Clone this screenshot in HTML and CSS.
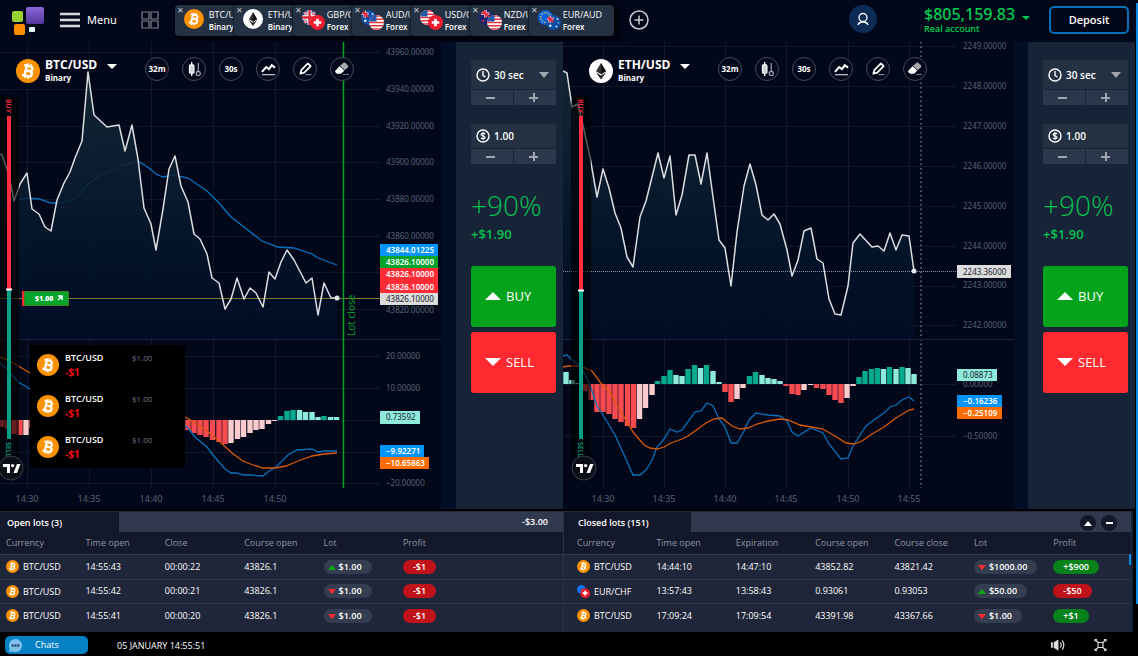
FILE: index.html
```html
<!DOCTYPE html>
<html lang="en">
<head>
<meta charset="utf-8">
<meta name="viewport" content="width=device-width, initial-scale=1">
<title>Trading terminal</title>
<link rel="stylesheet" href="styles.css">
</head>
<body>
<svg class="sprite" aria-hidden="true">
  <defs>
    <symbol id="btc" viewBox="0 0 24 24">
      <circle cx="12" cy="12" r="12" fill="#fe9205"/>
      <g transform="rotate(13 12 12)" fill="none" stroke="#fff" stroke-width="2.400">
        <path d="M7 7h6c3.600 0 3.600 4.800 0 4.800H9.500M13 11.800c4.600 0 4.600 5.400 0 5.400H7M9.600 7v10.200"/>
        <path d="M10.400 4.600V7M13.400 4.600V7M10.400 17v2.600M13.400 17v2.600" stroke-width="1.600"/>
      </g>
    </symbol>
    <symbol id="eth" viewBox="0 0 24 24">
      <circle cx="12" cy="12" r="12" fill="#fff"/>
      <path d="M12 4l5 8.200-5 3-5-3z" fill="#333"/><path d="M12 4l5 8.200-5 3z" fill="#111"/>
      <path d="M7 13.400l5 3 5-3-5 7z" fill="#222"/>
    </symbol>
    <clipPath id="disc"><circle cx="7" cy="7" r="7"/></clipPath>
    <symbol id="us" viewBox="0 0 14 14"><g clip-path="url(#disc)"><path fill="#fff" d="M0 0h14v14H0z"/><path stroke="#e8343f" stroke-width="1.400" d="M0 1h14M0 4h14M0 7h14M0 10h14M0 13h14"/><path fill="#2458a8" d="M0 0h7v6H0z"/></g></symbol>
    <symbol id="ch" viewBox="0 0 14 14"><g clip-path="url(#disc)"><path fill="#ee1c2e" d="M0 0h14v14H0z"/><path stroke="#fff" stroke-width="2.400" d="M7 3.500v7M3.500 7h7"/></g></symbol>
    <symbol id="gb" viewBox="0 0 14 14"><g clip-path="url(#disc)"><path fill="#1f3f94" d="M0 0h14v14H0z"/><path stroke="#fff" stroke-width="2.600" d="M0 0l14 14M14 0L0 14"/><path stroke="#e0283a" d="M0 0l14 14M14 0L0 14"/><path stroke="#fff" stroke-width="4" d="M7 0v14M0 7h14"/><path stroke="#e0283a" stroke-width="2.200" d="M7 0v14M0 7h14"/></g></symbol>
    <symbol id="au" viewBox="0 0 14 14"><g clip-path="url(#disc)"><path fill="#0d4fa4" d="M0 0h14v14H0z"/><path stroke="#fff" stroke-width="2.400" d="M0 3.500h7M3.500 0v7"/><path stroke="#e8283a" stroke-width="1.400" d="M0 3.500h7M3.500 0v7M0 0l7 7"/><path fill="#fff" d="M3 9h2v2H3zM10 3h1.500v1.500H10zM9 10h1.500v1.500H9zM11 7h1v1h-1z"/></g></symbol>
    <symbol id="nz" viewBox="0 0 14 14"><g clip-path="url(#disc)"><path fill="#12246e" d="M0 0h14v14H0z"/><path stroke="#fff" stroke-width="2.400" d="M2 3.500h8M6 0v7"/><path stroke="#e8283a" stroke-width="1.400" d="M2 3.500h8M6 0v7M2 0l8 7"/><path fill="#e8283a" d="M3 9h2v2H3zM10 7h1.500v1.500H10z"/></g></symbol>
    <symbol id="eu" viewBox="0 0 14 14"><circle cx="7" cy="7" r="7" fill="#0a63e0"/><circle cx="7" cy="7" r="4.500" fill="none" stroke="#f2d431" stroke-width="1.200" stroke-dasharray="1.200 1.156"/></symbol>
    <symbol id="candles" viewBox="0 0 16 16"><path d="M5 0v15" stroke="#fff" stroke-width="1.400"/><rect x="2.600" y="3" width="4.800" height="9" rx="1.200" fill="#cfd3da" stroke="#fff" stroke-width="1.200"/><path d="M12 1v9" stroke="#aab" stroke-width="1.200"/><circle cx="12" cy="12.200" r="2.200" fill="none" stroke="#aab" stroke-width="1.200"/></symbol>
    <symbol id="trend" viewBox="0 0 16 16"><path d="M1 10.500L5.500 5.500l3 2 3-4L15 6" fill="none" stroke="#fff" stroke-width="2.200"/><path d="M1 13.500h14" stroke="#b9bec8" stroke-width="1.400"/></symbol>
    <symbol id="pencil" viewBox="0 0 16 16"><path d="M2.500 12.500l1.200-4.200L10.500 1.500l3 3-6.800 6.800z" fill="none" stroke="#fff" stroke-width="1.800" stroke-linejoin="round"/><path d="M8 13.500h6.500" stroke="#8b92a0" stroke-width="1.200"/></symbol>
    <symbol id="eraser" viewBox="0 0 16 16"><path d="M0 10.500q0-1 1-2L5 4.500 9.800 9.300 6.500 12.600H2z" fill="#fff"/><path d="M5.400 4.100L9 .8q1-.8 2 0l2.800 2.800q.8 1 0 2L10.200 8.900z" fill="#a8a8ad"/><path d="M8.500 13.300H15" stroke="#6b7383" stroke-width="1.200"/></symbol>
    <symbol id="clock" viewBox="0 0 14 14"><circle cx="7" cy="7" r="6" fill="none" stroke="#fff" stroke-width="1.400"/><path d="M7 3v4.500l2.500 1.500" fill="none" stroke="#fff" stroke-width="1.400"/></symbol>
    <symbol id="coin" viewBox="0 0 14 14"><circle cx="7" cy="7" r="6" fill="none" stroke="#fff" stroke-width="1.400"/><path d="M9 5C8 3.800 5 4 5.200 5.600 5.400 7.200 9 6.700 9 8.500 9 10 6 10.200 4.900 8.900M7 3v8" fill="none" stroke="#fff" stroke-width="1.200"/></symbol>
    <symbol id="tv" viewBox="0 0 26 26"><circle cx="13" cy="13" r="12" fill="#0b0e17" stroke="#3a3f4a"/><path d="M5 9h7v9H9v-6H5zM19 9h3.500L19 18h-3.500z" fill="#fff"/><circle cx="14.600" cy="10.600" r="1.700" fill="#fff"/></symbol>
    <linearGradient id="fill" x1="0" y1="72" x2="0" y2="340" gradientUnits="userSpaceOnUse"><stop offset="0" stop-color="#152a38"/><stop offset=".35" stop-color="#0c2032"/><stop offset=".7" stop-color="#03142a"/><stop offset="1" stop-color="#000d27"/></linearGradient>
    <linearGradient id="violet" x1="0" y1="0" x2="0" y2="1"><stop offset="0" stop-color="#8a68d8"/><stop offset="1" stop-color="#5537a0"/></linearGradient>
  </defs>
</svg>

<header class="topbar">
  <svg class="logo" viewBox="0 0 34 30" aria-label="Logo"><rect y="4" width="11" height="11" rx="2" fill="#97d22f"/><rect x="14" width="18" height="17" rx="2" fill="url(#violet)"/><rect x="2" y="17" width="11" height="11" rx="2" fill="#ff8c05"/><rect x="17" y="20" width="6" height="5" rx="1" fill="#e4f7fd"/></svg>
  <button class="menu" type="button"><svg viewBox="0 0 20 16"><path d="M0 2h20M0 8h20M0 14h20" stroke="#d5d7dc" stroke-width="2.600"/></svg>Menu</button>
  <button class="layout" type="button" aria-label="Layout"><svg viewBox="0 0 18 18"><path d="M1 1h7v7H1zM10 1h7v7h-7zM1 10h7v7H1zM10 10h7v7h-7z" fill="none" stroke="#80848d" stroke-width="1.200"/></svg></button>
  <nav class="tabs">
    <div class="tab"><button class="close" type="button" aria-label="Close">✕</button><svg class="coin"><use href="#btc"/></svg><a href="#btc-usd"><b>BTC/USD</b><small>Binary</small></a></div>
    <div class="tab"><button class="close" type="button" aria-label="Close">✕</button><svg class="coin"><use href="#eth"/></svg><a href="#eth-usd"><b>ETH/USD</b><small>Binary</small></a></div>
    <div class="tab"><button class="close" type="button" aria-label="Close">✕</button><svg class="pair" viewBox="0 0 24 20"><use href="#gb" width="15" height="15"/><use href="#ch" x="8" y="5" width="15" height="15"/></svg><a href="#gbp-chf"><b>GBP/CHF</b><small>Forex</small></a></div>
    <div class="tab"><button class="close" type="button" aria-label="Close">✕</button><svg class="pair" viewBox="0 0 24 20"><use href="#au" width="15" height="15"/><use href="#us" x="8" y="5" width="15" height="15"/></svg><a href="#aud-usd"><b>AUD/USD</b><small>Forex</small></a></div>
    <div class="tab"><button class="close" type="button" aria-label="Close">✕</button><svg class="pair" viewBox="0 0 24 20"><use href="#us" width="15" height="15"/><use href="#ch" x="8" y="5" width="15" height="15"/></svg><a href="#usd-chf"><b>USD/CHF</b><small>Forex</small></a></div>
    <div class="tab"><button class="close" type="button" aria-label="Close">✕</button><svg class="pair" viewBox="0 0 24 20"><use href="#nz" width="15" height="15"/><use href="#us" x="8" y="5" width="15" height="15"/></svg><a href="#nzd-usd"><b>NZD/USD</b><small>Forex</small></a></div>
    <div class="tab tab-last"><button class="close" type="button" aria-label="Close">✕</button><svg class="pair" viewBox="0 0 24 20"><use href="#eu" width="15" height="15"/><use href="#au" x="8" y="5" width="15" height="15"/></svg><a href="#eur-aud"><b>EUR/AUD</b><small>Forex</small></a></div>
  </nav>
  <button class="add" type="button" aria-label="Add asset"><svg viewBox="0 0 20 20"><circle cx="10" cy="10" r="9" fill="none" stroke="#c9ccd3" stroke-width="1.500"/><path d="M10 5.500v9M5.500 10h9" stroke="#c9ccd3" stroke-width="1.500"/></svg></button>
  <div class="account">
    <button class="user" type="button" aria-label="Profile"><svg viewBox="0 0 16 16"><circle cx="8" cy="6.500" r="4" fill="none" stroke="#fff" stroke-width="1.300"/><path d="M3 14c1-4 9-4 10 0" fill="none" stroke="#fff" stroke-width="1.300"/></svg></button>
    <button class="balance" type="button"><span class="sum">$805,159.83 <i class="caret green"></i></span><small>Real account</small></button>
    <button class="deposit" type="button">Deposit</button>
  </div>
</header>

<main class="panels">
  <section class="panel">
    <div class="chart">
      <svg class="plot" viewBox="0 42 456 467" preserveAspectRatio="xMinYMin slice">
        <path class="margin" d="M441 42h15v467h-15z"/>
        <path class="grid" d="M27.500 42v446M89.500 42v446M151.500 42v446M213.500 42v446M275.500 42v446M0 52.500h380M0 89.500h380M0 126.500h380M0 162.500h380M0 199.500h380M0 236.500h380M0 272.500h380M0 309.500h380M0 356.500h380M0 388.500h380M0 420.500h380M0 452.500h380M0 483.500h380"/>
        <path class="avg" d="M0 203L27 198 39 199 51 203 60 203 70 201 80 194 88 184 100 175 120 166 138 161 149 168 156 174 163 177 173 175 188 178 207 191 219 203 231 217 244 227 262 241 278 247 294 248 312 254 318 258 337 265"/>
        <path class="area" d="M0 340V154L2 155 9 175 14 201 20 184 27 173 32 209 39 214 45 227 51 231 57 200 64 183 70 172 75 158 82 141 88 72 94 115 107 127 119 125 125 151 132 125 138 159 144 208 151 224 156 250 163 209 169 169 175 156 181 186 188 202 194 234 200 239 207 254 212 278 219 283 225 309 231 299 237 278 244 299 250 288 256 293 263 307 269 272 275 279 281 262 287 250 294 260 306 283 312 278 318 315 324 283 331 298 337 298V340z"/>
        <path class="rule" d="M0 298.500h380"/>
        <path class="price" d="M0 154L2 155 9 175 14 201 20 184 27 173 32 209 39 214 45 227 51 231 57 200 64 183 70 172 75 158 82 141 88 72 94 115 107 127 119 125 125 151 132 125 138 159 144 208 151 224 156 250 163 209 169 169 175 156 181 186 188 202 194 234 200 239 207 254 212 278 219 283 225 309 231 299 237 278 244 299 250 288 256 293 263 307 269 272 275 279 281 262 287 250 294 260 306 283 312 278 318 315 324 283 331 298 337 298"/>
        <circle cx="337" cy="298" r="2.500" fill="#e4e6ea"/>
        <path class="divider" d="M0 339.500h441"/>
        <path class="bar red" d="M2 420v7M8 420v9M14 420v14M20 420v15M32 420v8M188 420v10M194 420v13M200 420v15M206 420v17M212.500 420v20M219 420v22M225 420v24"/>
        <path class="bar pink" d="M26 420v15M231 420v23M237.500 420v19M243.500 420v17M250 420v13M256 420v10M262 420v9M268.500 420v4M274.500 420v1"/>
        <path class="bar green" d="M280.500 420v-4M287 420v-9M293 420v-10M324 420v-4"/>
        <path class="bar mint" d="M299.500 420v-10M305.500 420v-8M312 420v-8M318 420v-3M330.500 420v-3M336.500 420v-3"/>
        <path class="macd" d="M0 363L9 371 18 382 27 387 40 395 160 405 185 426 188 428 195 437 207 447 213 455 225 469 231 473 237 473 243 475 250 475 263 476 269 471 276 467 288 455 297 450 312 449 318 452 324 451 337 451"/>
        <path class="signal" d="M0 357L10 361 20 367 30 373 160 405 185 417 192 421 206 430 219 441 232 453 243 461 253 465 263 468 275 468 286 466 298 461 312 456 324 454 337 453"/>
        <path d="M343.500 42v446" stroke="#05a42b" stroke-width="1.500"/>
        <text class="lot" transform="translate(355 336) rotate(-90)">Lot close</text>
        <g class="axis"><text x="386" y="55">43960.00000</text><text x="386" y="92">43940.00000</text><text x="386" y="129">43920.00000</text><text x="386" y="165">43900.00000</text><text x="386" y="202">43880.00000</text><text x="386" y="239">43860.00000</text><text x="386" y="313">43820.00000</text><text x="386" y="359">20.00000</text><text x="386" y="391">10.00000</text><text x="386" y="486">−20.00000</text></g>
        <g class="times"><text x="27" y="502">14:30</text><text x="89" y="502">14:35</text><text x="151" y="502">14:40</text><text x="213" y="502">14:45</text><text x="275" y="502">14:50</text></g>
        <g class="tag"><rect x="380" y="244" width="58" height="12" fill="#0093fa"/><rect x="380" y="256" width="58" height="13" fill="#05a42b"/><rect x="380" y="268" width="58" height="25" fill="#ff2b35"/><rect x="380" y="293" width="58" height="12" fill="#dcdcdc"/><rect x="380" y="411" width="40" height="13" fill="#8eeadb"/><rect x="380" y="445" width="44" height="12" fill="#0093fa"/><rect x="380" y="457" width="49" height="12" fill="#ff6d00"/>
        <text x="386" y="253">43844.01225</text><text x="386" y="265">43826.10000</text><text x="386" y="277">43826.10000</text><text x="386" y="290">43826.10000</text><text class="dark" x="386" y="302">43826.10000</text><text class="dark" x="386" y="420">0.73592</text><text x="386" y="454">−9.92271</text><text x="386" y="466">−10.65863</text></g>
        <path d="M0 95h9q10 0 10 10v352H0z" fill="#000" opacity=".6"/>
        <path class="mood" d="M9 116v174" stroke="#ff2b41"/><path class="mood" d="M9 290v149" stroke="#07a086"/><path d="M6 289.500h6" stroke="#fff" stroke-width="2"/>
        <text class="buy-text" transform="translate(6 99) rotate(90)">BUY</text><text class="sell-text" transform="translate(6 442) rotate(90)">SELL</text>
        <use href="#tv" x="-2" y="455" width="26" height="26"/>
        <path d="M22 291h3v15h-3z" fill="#ff2b35"/><path d="M24.500 291.500h44v14h-44z" fill="#05a42b" stroke="#4b7a22"/>
        <text class="order" x="35" y="301">$1.00</text><path d="M58 296h4v4M62 296l-4 4" fill="none" stroke="#fff" stroke-width="1.500"/>
      </svg>
      <div class="overlay">
        <svg class="asset-icon"><use href="#btc"/></svg>
        <div class="asset"><b>BTC/USD</b><small>Binary</small></div><i class="caret"></i>
        <div class="tools">
          <button type="button">32m</button>
          <button type="button" aria-label="Chart type"><svg><use href="#candles"/></svg></button>
          <button type="button">30s</button>
          <button type="button" aria-label="Indicators"><svg><use href="#trend"/></svg></button>
          <button type="button" aria-label="Draw"><svg><use href="#pencil"/></svg></button>
          <button type="button" aria-label="Erase"><svg><use href="#eraser"/></svg></button>
        </div>
      </div>
      <ul class="popup">
        <li><svg><use href="#btc"/></svg><div><b>BTC/USD</b><strong>-$1</strong></div><span>$1.00</span></li>
        <li><svg><use href="#btc"/></svg><div><b>BTC/USD</b><strong>-$1</strong></div><span>$1.00</span></li>
        <li><svg><use href="#btc"/></svg><div><b>BTC/USD</b><strong>-$1</strong></div><span>$1.00</span></li>
      </ul>
    </div>
    <aside class="trade">
      <div class="field"><label class="value"><svg><use href="#clock"/></svg><select aria-label="Time"><option>30 sec</option></select><i class="caret grey"></i></label><button type="button" aria-label="Less time"><i class="minus"></i></button><button type="button" aria-label="More time"><i class="minus plus"></i></button></div>
      <div class="field field-sum"><label class="value"><svg><use href="#coin"/></svg><input type="text" value="1.00" aria-label="Amount"></label><button type="button" aria-label="Less"><i class="minus"></i></button><button type="button" aria-label="More"><i class="minus plus"></i></button></div>
      <p class="percent">+90%</p>
      <p class="win">+$1.90</p>
      <button class="buy" type="button"><i class="up"></i>BUY</button>
      <button class="sell" type="button"><i class="down"></i>SELL</button>
    </aside>
  </section>

  <section class="panel">
    <div class="chart">
      <svg class="plot" viewBox="563 42 465 467" preserveAspectRatio="xMinYMin slice">
        <path class="margin" d="M1014 42h14v467h-14z"/>
        <path class="grid" d="M603.500 42v446M664.500 42v446M725.500 42v446M786.500 42v446M848.500 42v446M909.500 42v446M563 46.500h393M563 86.500h393M563 126.500h393M563 166.500h393M563 206.500h393M563 246.500h393M563 286.500h393M563 325.500h393M563 384.500h393M563 436.500h393"/>
        <path class="area" d="M563 340V71L567 73 572 107 578 104 583 125 590 157 597 197 603 169 609 188 615 213 621 228 627 257 633 267 640 217 646 201 658 153 664 178 670 156 676 215 682 195 689 155 695 155 701 184 707 153 713 197 719 240 725 248 731 286 737 232 744 186 750 164 756 185 762 215 768 220 774 214 780 224 787 250 792 276 798 260 804 231 811 228 817 259 823 263 829 299 835 314 841 315 848 286 853 243 860 234 872 247 878 246 884 251 890 233 896 250 902 235 909 236 914 271V340z"/>
        <path d="M563 271.500h395" stroke="#8d939e" stroke-dasharray="1 1"/>
        <path class="price" d="M563 71L567 73 572 107 578 104 583 125 590 157 597 197 603 169 609 188 615 213 621 228 627 257 633 267 640 217 646 201 658 153 664 178 670 156 676 215 682 195 689 155 695 155 701 184 707 153 713 197 719 240 725 248 731 286 737 232 744 186 750 164 756 185 762 215 768 220 774 214 780 224 787 250 792 276 798 260 804 231 811 228 817 259 823 263 829 299 835 314 841 315 848 286 853 243 860 234 872 247 878 246 884 251 890 233 896 250 902 235 909 236 914 271"/>
        <circle cx="914" cy="271" r="2.500" fill="#e4e6ea"/>
        <path d="M921 42v446" stroke="#a3a8b2" stroke-dasharray="1.500 3"/>
        <path class="divider" d="M563 339.500h451"/>
        <path class="bar red" d="M585 384v7M591 384v16M597 384v28M603 384v28M609 384v30M615 384v35M621 384v38M627.500 384v42M633.500 384v44M725 384v8M731 384v18M786 384v2M792 384v10M798 384v11M816.500 384v4M823 384v5M829 384v11M835 384v16M841 384v19"/>
        <path class="bar pink" d="M639.500 384v35M645.500 384v24M652 384v11M737 384v15M743 384v4M804 384v6M810.500 384v1M847 384v14M853 384v2"/>
        <path class="bar green" d="M657.500 384v-3M664 384v-8M670 384v-14M688 384v-15M694.500 384v-19M706.500 384v-19M749.500 384v-8M755.500 384v-12M859 384v-7M865 384v-13M871.500 384v-15M877.500 384v-16M889.500 384v-17M902 384v-17"/>
        <path class="bar mint" d="M566 384v-12M572 384v-4M578 384v-1M676 384v-9M682 384v-8M700.500 384v-16M713 384v-13M719 384v-2M762 384v-9M768 384v-6M774 384v-5M780 384v-3M883.500 384v-15M896 384v-15M908 384v-16M914 384v-10"/>
        <path class="macd" d="M563 356L567 355 572 360 578 364 583 370 590 385 597 406 603 415 615 435 621 448 633 475 640 475 646 470 652 460 657 447 664 439 670 429 677 432 682 430 695 412 701 411 707 403 713 406 719 419 725 427 731 443 737 443 744 431 749 420 756 413 768 415 780 416 787 421 792 432 798 436 811 428 823 433 829 444 841 459 848 458 853 446 866 426 878 417 884 413 890 407 896 405 902 400 909 397 914 401"/>
        <path class="signal" d="M563 367L568 366 580 366 592 371 600 382 610 393 621 412 633 432 644 445 650 448 657 449 664 447 671 443 682 439 688 436 695 431 706 423 714 419 722 418 732 426 740 429 748 428 757 424 768 421 780 419 788 420 800 425 811 427 823 429 835 436 846 443 854 444 862 441 872 434 884 427 896 418 909 410 914 409"/>
        <g class="axis"><text x="963" y="49">2249.00000</text><text x="963" y="89">2248.00000</text><text x="963" y="129">2247.00000</text><text x="963" y="169">2246.00000</text><text x="963" y="209">2245.00000</text><text x="963" y="249">2244.00000</text><text x="963" y="288">2243.00000</text><text x="963" y="328">2242.00000</text><text x="963" y="387">0.00000</text><text x="963" y="439">−0.50000</text></g>
        <g class="times"><text x="603" y="502">14:30</text><text x="664" y="502">14:35</text><text x="725" y="502">14:40</text><text x="786" y="502">14:45</text><text x="848" y="502">14:50</text><text x="909" y="502">14:55</text></g>
        <g class="tag"><rect x="957" y="265" width="54" height="13" fill="#dcdcdc"/><rect x="957" y="369" width="40" height="12" fill="#8eeadb"/><rect x="957" y="395" width="45" height="12" fill="#0093fa"/><rect x="957" y="407" width="45" height="12" fill="#ff6d00"/>
        <text class="dark" x="963" y="275">2243.36000</text><text class="dark" x="963" y="378">0.08873</text><text x="963" y="404">−0.16236</text><text x="963" y="416">−0.25109</text></g>
        <path d="M571 457V105q0-10 10-10t10 10v352z" fill="#000" opacity=".6"/>
        <path class="mood" d="M581 116v174" stroke="#ff2b41"/><path class="mood" d="M581 290v149" stroke="#07a086"/><path d="M578 290.500h6" stroke="#fff" stroke-width="2"/>
        <text class="buy-text" transform="translate(578 99) rotate(90)">BUY</text><text class="sell-text" transform="translate(578 442) rotate(90)">SELL</text>
        <use href="#tv" x="571" y="455" width="26" height="26"/>
      </svg>
      <div class="overlay overlay-inset">
        <svg class="asset-icon"><use href="#eth"/></svg>
        <div class="asset"><b>ETH/USD</b><small>Binary</small></div><i class="caret"></i>
        <div class="tools">
          <button type="button">32m</button>
          <button type="button" aria-label="Chart type"><svg><use href="#candles"/></svg></button>
          <button type="button">30s</button>
          <button type="button" aria-label="Indicators"><svg><use href="#trend"/></svg></button>
          <button type="button" aria-label="Draw"><svg><use href="#pencil"/></svg></button>
          <button type="button" aria-label="Erase"><svg><use href="#eraser"/></svg></button>
        </div>
      </div>
    </div>
    <aside class="trade">
      <div class="field"><label class="value"><svg><use href="#clock"/></svg><select aria-label="Time"><option>30 sec</option></select><i class="caret grey"></i></label><button type="button" aria-label="Less time"><i class="minus"></i></button><button type="button" aria-label="More time"><i class="minus plus"></i></button></div>
      <div class="field field-sum"><label class="value"><svg><use href="#coin"/></svg><input type="text" value="1.00" aria-label="Amount"></label><button type="button" aria-label="Less"><i class="minus"></i></button><button type="button" aria-label="More"><i class="minus plus"></i></button></div>
      <p class="percent">+90%</p>
      <p class="win">+$1.90</p>
      <button class="buy" type="button"><i class="up"></i>BUY</button>
      <button class="sell" type="button"><i class="down"></i>SELL</button>
    </aside>
  </section>
</main>

<section class="lots">
  <div class="lot-panel">
    <div class="lot-head"><h2>Open lots (3)</h2><span class="total">-$3.00</span></div>
    <table class="open-table">
      <thead><tr><th>Currency</th><th>Time open</th><th>Close</th><th>Course open</th><th>Lot</th><th class="rest">Profit</th></tr></thead>
      <tbody>
        <tr><td><svg><use href="#btc"/></svg>BTC/USD</td><td>14:55:43</td><td>00:00:22</td><td>43826.1</td><td><span class="pill"><i class="mini-up"></i>$1.00</span></td><td><span class="profit loss">-$1</span></td></tr>
        <tr><td><svg><use href="#btc"/></svg>BTC/USD</td><td>14:55:42</td><td>00:00:21</td><td>43826.1</td><td><span class="pill"><i class="mini-down"></i>$1.00</span></td><td><span class="profit loss">-$1</span></td></tr>
        <tr><td><svg><use href="#btc"/></svg>BTC/USD</td><td>14:55:41</td><td>00:00:20</td><td>43826.1</td><td><span class="pill"><i class="mini-down"></i>$1.00</span></td><td><span class="profit loss">-$1</span></td></tr>
      </tbody>
    </table>
  </div>
  <div class="lot-panel closed">
    <div class="lot-head"><h2>Closed lots (151)</h2><span class="controls"><button type="button" aria-label="Expand"><i></i></button><button type="button" aria-label="Collapse"><b></b></button></span></div>
    <table class="closed-table">
      <thead><tr><th>Currency</th><th>Time open</th><th>Expiration</th><th>Course open</th><th>Course close</th><th>Lot</th><th class="rest">Profit</th></tr></thead>
      <tbody>
        <tr><td><svg><use href="#btc"/></svg>BTC/USD</td><td>14:44:10</td><td>14:47:10</td><td>43852.82</td><td>43821.42</td><td><span class="pill"><i class="mini-down"></i>$1000.00</span></td><td><span class="profit">+$900</span></td></tr>
        <tr><td><svg viewBox="0 0 12 12"><circle cx="4" cy="4" r="4" fill="#1672ef"/><use href="#ch" x="3" y="3" width="9" height="9"/></svg>EUR/CHF</td><td>13:57:43</td><td>13:58:43</td><td>0.93061</td><td>0.93053</td><td><span class="pill"><i class="mini-up"></i>$50.00</span></td><td><span class="profit loss">-$50</span></td></tr>
        <tr><td><svg><use href="#btc"/></svg>BTC/USD</td><td>17:09:24</td><td>17:09:54</td><td>43391.98</td><td>43367.66</td><td><span class="pill"><i class="mini-down"></i>$1.00</span></td><td><span class="profit">+$1</span></td></tr>
      </tbody>
    </table>
    <i class="table-scroll"></i>
  </div>
</section>

<footer class="bottom">
  <button class="chats" type="button"><svg viewBox="0 0 16 16"><path d="M8 1a7 7 0 1 1-3 13.300L1 15l.8-3.800A7 7 0 0 1 8 1z" fill="#7cc0ea"/><path d="M4 8h2M7 8h2M10 8h2" stroke="#10284a" stroke-width="2"/></svg>Chats</button>
  <time>05 JANUARY 14:55:51</time>
  <div class="system">
    <button type="button" aria-label="Sound"><svg viewBox="0 0 16 14"><path d="M1 4h2v6H1zM4 4l5-3v12l-5-3z" fill="#ddd"/><path d="M11 4q2 3 0 6M13 2q3.500 5 0 10" fill="none" stroke="#ddd" stroke-width="1.200"/></svg></button>
    <button type="button" aria-label="Full screen"><svg viewBox="0 0 14 14"><path d="M1 4V1h3zM10 1h3v3zM13 10v3h-3zM4 13H1v-3z" fill="#eee"/><path d="M2 2l3 3M12 2L9 5M12 12L9 9M2 12l3-3M4.500 4.500h5v5h-5z" fill="none" stroke="#ddd" stroke-width="1.200"/></svg></button>
  </div>
</footer>
<div class="scroll-track"></div>
</body>
</html>
```

FILE: styles.css
```css
* { box-sizing: border-box; }

body {
  margin: 0;
  min-height: 100vh;
  display: flex;
  flex-direction: column;
  position: relative;
  background: #000;
  color: #fff;
  font: 9px/12px "Open Sans", "Noto Sans", sans-serif;
}

button, select, input {
  font: inherit;
  color: inherit;
  border: 0;
  padding: 0;
  margin: 0;
  background: none;
}

a { color: inherit; text-decoration: none; }
h2, p, ul { margin: 0; padding: 0; }
svg { display: block; flex: none; }
.sprite { position: absolute; width: 0; height: 0; }

.caret {
  border: 5px solid transparent;
  border-top-color: #fff;
  border-bottom: 0;
}
.caret.green { display: inline-block; border-width: 4px 4px 0; border-top-color: #00c853; vertical-align: 0; margin-left: 3px; }
.caret.grey { border-top-width: 6px; border-top-color: #a1a6af; }

/* top bar */
.topbar {
  height: 42px;
  display: flex;
  align-items: flex-start;
  padding: 5px 9px 0 12px;
  background: #02071a;
}
.logo { width: 34px; height: 30px; margin-top: 2px; }
.menu { display: flex; align-items: center; gap: 7px; height: 30px; margin-left: 14px; font: 11px/16px "Noto Sans", sans-serif; }
.menu svg { width: 20px; height: 16px; }
.layout { margin: 6px 0 0 24px; }
.layout svg { width: 18px; height: 18px; }
.tabs { display: flex; margin-left: 16px; box-shadow: 4px 2px 10px #000; }
.tab {
  position: relative;
  display: flex;
  width: 62px;
  height: 31px;
  margin-right: -3px;
  padding: 4px 0 0 9px;
  overflow: hidden;
  border-radius: 4px;
  background: #243142;
  box-shadow: 0 0 3px #000;
}
.tab-last { width: 85px; margin: 0; }
.tab a { position: absolute; left: 34px; top: 4px; width: 24px; overflow: hidden; white-space: nowrap; }
.tab-last a { width: auto; }
.tab b, .tab small { display: block; font-size: 9px; line-height: 12px; font-weight: 500; }
.tab small { font-size: 8px; line-height: 11px; font-weight: 600; }
.tab .coin { width: 20px; height: 20px; }
.tab .pair { width: 24px; height: 20px; margin-top: 1px; }
.close { position: absolute; left: 2px; top: 1px; font-size: 8px; line-height: 8px; color: #c5c9d0; }
.add { margin: 5px 0 0 15px; }
.add svg { width: 20px; height: 20px; }
.account { display: flex; align-items: flex-start; margin-left: auto; }
.user { display: grid; place-items: center; width: 28px; height: 28px; border-radius: 50%; background: #0c2c56; }
.user svg { width: 16px; height: 16px; }
.balance { width: 110px; margin-left: 47px; text-align: left; color: #00cf52; }
.sum { display: block; font: 500 16px/18px "Noto Sans", sans-serif; white-space: nowrap; }
.balance small { display: block; font-size: 9px; line-height: 12px; font-weight: 600; }
.deposit { width: 80px; height: 28px; margin: 1px 0 0 15px; border: 2px solid #0870b8; border-radius: 5px; font-size: 11px; font-weight: 600; }

/* charts */
.panels { flex: 1; display: grid; grid-template-columns: 563fr 572fr; margin-right: 3px; }
.panel { display: flex; min-width: 0; background: #020819; }
.chart { position: relative; flex: 1; min-width: 0; overflow: hidden; }
.plot { position: absolute; width: 100%; height: 100%; }
.margin { fill: #020e25; }
.grid { fill: none; stroke: #0c1b2c; }
.divider { stroke: #1a2637; }
.area { fill: url(#fill); fill-opacity: .86; }
.price { fill: none; stroke: #dcdee2; stroke-width: 1.5; stroke-linejoin: round; }
.avg { fill: none; stroke: #0874c4; stroke-width: 1.3; }
.macd { fill: none; stroke: #0870b8; stroke-width: 1.3; }
.signal { fill: none; stroke: #d9590c; stroke-width: 1.3; }
.rule { stroke: #807a24; }
.bar { fill: none; stroke-width: 5.4; }
.red { stroke: #f84b51; }
.pink { stroke: #fccbce; }
.green { stroke: #05a98d; }
.mint { stroke: #8eeadb; }
.mood { stroke-width: 4; }
.axis, .tag, .times { font: 8px "Noto Sans", sans-serif; fill: #566274; }
.tag { fill: #fff; font-weight: 600; }
.dark { fill: #1b222c; font-weight: 400; }
.times { font-size: 9px; text-anchor: middle; }
.lot { font: 10px "Noto Sans", sans-serif; fill: #069a2b; }
.buy-text, .sell-text { font: 600 7px "Noto Sans", sans-serif; fill: #ff2b41; }
.sell-text { fill: #07a086; }
.order { font: 800 7px "Open Sans", sans-serif; fill: #fff; }

.overlay { position: absolute; left: 16px; top: 15px; display: flex; }
.overlay-inset { left: 26px; }
.asset-icon { width: 24px; height: 24px; margin-top: 2px; }
.asset { width: 62px; margin-left: 5px; }
.asset b { display: block; font-size: 12px; line-height: 15px; font-weight: 700; }
.asset small { display: block; font-size: 8px; line-height: 12px; font-weight: 700; }
.overlay .caret { height: 5px; margin-top: 7px; }
.tools { display: flex; gap: 13px; margin-left: 28px; }
.tools button {
  display: grid;
  place-items: center;
  width: 24px;
  height: 24px;
  border: 1px solid #464b5a;
  border-radius: 50%;
  background: #03081a;
  font-size: 8px;
  font-weight: 700;
}
.tools svg { width: 15px; height: 15px; }

.popup { position: absolute; left: 30px; top: 303px; width: 155px; list-style: none; background: #000; border-radius: 3px; }
.popup li { display: flex; height: 41px; padding: 6px 7px 0; }
.popup svg { width: 22px; height: 22px; margin-top: 3px; }
.popup div { width: 67px; margin-left: 6px; }
.popup b, .popup strong { display: block; font-size: 9px; line-height: 13px; font-weight: 600; }
.popup strong { margin-top: 2px; font-size: 10px; font-weight: 700; color: #f80512; }
.popup span { line-height: 13px; font-size: 8px; color: #6a788c; }

/* order form */
.trade { width: 107px; flex: none; padding: 18px 7px 0 15px; background: #172437; }
.field { display: grid; grid-template-columns: 1fr 1fr; gap: 1px; margin-bottom: 19px; }
.field .value { grid-column: 1 / 3; display: flex; align-items: center; gap: 4px; height: 29px; padding: 0 7px 0 5px; background: #243142; font-size: 10px; font-weight: 600; }
.field-sum .value { height: 24px; }
.value svg { width: 14px; height: 14px; }
.value select { appearance: none; flex: 1; min-width: 0; }
.value input { width: 50px; }
.field button { display: grid; place-items: center; height: 15px; padding-right: 3px; background: #2b384b; }
.minus { width: 9px; height: 9px; background: linear-gradient(#a0a6b0, #a0a6b0) center / 9px 2px no-repeat; }
.plus { background: linear-gradient(#a0a6b0, #a0a6b0) center / 9px 2px no-repeat, linear-gradient(#a0a6b0, #a0a6b0) center / 2px 9px no-repeat; }
.percent { margin-top: 22px; font-size: 28px; line-height: 38px; font-weight: 300; color: #07c150; }
.win { font-size: 13px; line-height: 20px; font-weight: 600; color: #07c150; }
.buy, .sell { display: flex; align-items: center; gap: 5px; width: 100%; height: 61px; margin-top: 22px; padding: 0 0 1px 14px; border-radius: 3px; background: #03a31c; font-size: 13px; }
.sell { margin-top: 5px; background: #ff2a30; }
.up, .down { border: 8px solid transparent; border-top: 0; border-bottom: 8px solid #fff; }
.down { border-bottom: 0; border-top: 8px solid #fff; }

/* lots */
.lots { display: grid; grid-template-columns: 563fr 570fr; margin: 2px 5px 0 0; height: 121px; }
.lot-panel { position: relative; background: #20263a; overflow: hidden; border-top: 1px solid #252b3c; }
.closed { border-left: 1px solid #2c3347; border-right: 2px solid #13213a; }
.lot-head { display: flex; height: 20px; background: #31394f; }
.lot-head h2 { width: 119px; padding-left: 7px; background: #13182b; font-size: 9px; line-height: 22px; font-weight: 600; }
.closed h2 { width: 127px; padding-left: 14px; }
.total { margin-left: auto; padding-right: 15px; line-height: 20px; font-weight: 600; }
.controls { display: flex; gap: 5px; margin: 3px 14px 0 auto; }
.controls button { display: grid; place-items: center; width: 16px; height: 16px; border-radius: 50%; background: #13182b; }
.controls i { border: 4px solid transparent; border-top: 0; border-bottom: 5px solid #fff; }
.controls b { width: 7px; height: 2px; background: #fff; }
.table-scroll { position: absolute; right: 0; top: 42px; width: 2px; height: 11px; background: #0b8be6; }

table { width: 100%; table-layout: fixed; border-collapse: collapse; }
th, td { width: 14%; padding: 0 0 0 13px; text-align: left; font-weight: 400; white-space: nowrap; }
.open-table th, .open-table td { width: 14.1%; padding-left: 6px; }
th.rest, .open-table th.rest { width: auto; }
thead { background: #13182b; }
th { height: 22px; color: #8e95a3; }
td { height: 25px; border-top: 1px solid #30364a; font-weight: 500; }
tbody tr:nth-child(2) td { height: 24px; }
td svg { display: inline-block; width: 13px; height: 13px; margin-right: 4px; vertical-align: -3px; }
.pill, .profit { display: inline-block; height: 14px; line-height: 14px; border-radius: 7px; background: #353d50; padding: 0 10px 0 4px; font-weight: 600; }
.mini-up, .mini-down { display: inline-block; margin-right: 3px; border: 4px solid transparent; border-top: 0; border-bottom: 5px solid #0aa80f; }
.mini-down { border-bottom: 0; border-top: 5px solid #ff2a30; }
.profit { padding: 0 10px; background: #078119; }
.loss { background: #c0121a; }

/* footer */
.bottom { display: flex; align-items: center; height: 24px; padding: 0 30px 0 5px; background: #000; }
.chats { display: flex; align-items: center; gap: 12px; width: 83px; height: 18px; margin-top: 2px; padding-left: 3px; border-radius: 5px; background: #0480c5; font-weight: 500; }
.chats svg { width: 15px; height: 15px; }
.bottom time { margin: 4px 0 0 29px; }
.system { display: flex; gap: 28px; margin: 2px 0 0 auto; }
.system svg { width: 15px; height: 14px; }

.scroll-track { position: absolute; right: 0; top: 3px; width: 2px; height: 601px; background: #0b8be6; }
```
